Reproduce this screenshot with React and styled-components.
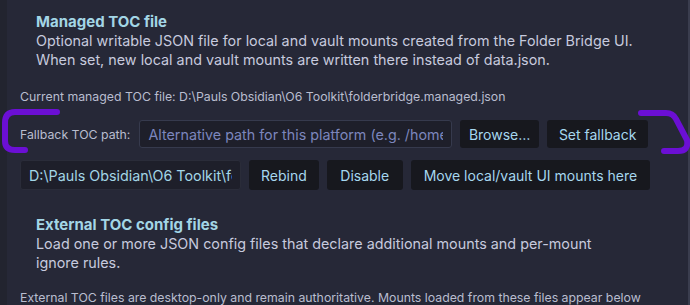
import React from 'react';
import styled, { createGlobalStyle } from 'styled-components';

const Global = createGlobalStyle`
  html, body {
    margin: 0;
    padding: 0;
    background: #262837;
    overflow: hidden;
  }
  * { box-sizing: border-box; }
`;

const Page = styled.div`
  position: relative;
  width: 690px;
  height: 305px;
  background: #262837;
  border-left: 7px solid #22242f;
  border-right: 2px solid #3a3d4e;
  font-family: Inter, "Noto Sans", sans-serif;
  padding: 12px 0 0 13px;
  color: #c8cbdc;
`;

const SettingInfo = styled.div`
  padding-left: 16px;
  margin-bottom: ${p => p.gap || 0}px;
`;

const Heading = styled.div`
  font-size: 15px;
  font-weight: 700;
  line-height: 19px;
  color: #a3d6e6;
  margin-bottom: 1px;
`;

const Desc = styled.div`
  font-size: 14.35px;
  line-height: 18.5px;
  color: #c7cade;
  white-space: nowrap;
`;

const Note = styled.div`
  font-size: 12.3px;
  line-height: 16px;
  color: #b9bdcf;
  white-space: nowrap;
  margin-bottom: ${p => p.gap || 0}px;
`;

const Row = styled.div`
  display: flex;
  align-items: center;
  gap: 8px;
  margin-bottom: ${p => p.gap || 0}px;
`;

const Label = styled.span`
  font-size: 12.3px;
  color: #b9bdcf;
  margin-right: 1px;
  white-space: nowrap;
`;

const Input = styled.input`
  height: ${p => p.h || 28}px;
  width: ${p => p.w}px;
  background: #1e1f2a;
  border: 1px solid ${p => (p.framed ? '#363a4d' : '#2a2c39')};
  border-radius: 3px;
  padding: 0 ${p => p.px || 8}px;
  font-family: inherit;
  font-size: 14.3px;
  color: #a3d6e6;
  outline: none;
  &::placeholder {
    color: #7c86bd;
  }
`;

const Button = styled.button`
  height: ${p => p.h || 28}px;
  padding: 0 ${p => p.px || 12}px;
  background: #17181e;
  border: none;
  border-radius: 3px;
  font-family: inherit;
  font-size: 14px;
  color: #a6d7ef;
  white-space: nowrap;
  cursor: pointer;
`;

const Mark = styled.svg`
  position: absolute;
  overflow: visible;
  pointer-events: none;
`;

export default function App() {
  return (
    <>
      <Global />
      <Page>
        <SettingInfo gap={20}>
          <Heading>Managed TOC file</Heading>
          <Desc>Optional writable JSON file for local and vault mounts created from the Folder Bridge UI.</Desc>
          <Desc>When set, new local and vault mounts are written there instead of data.json.</Desc>
        </SettingInfo>
        <Note gap={15}>Current managed TOC file: D:\Pauls Obsidian\O6 Toolkit\folderbridge.managed.json</Note>
        <Row gap={12}>
          <Label>Fallback TOC path:</Label>
          <Input framed w={313} px={8} placeholder="Alternative path for this platform (e.g. /home/pauls/obsidian/folderbridge.managed.json)" />
          <Button px={8.5}>Browse…</Button>
          <Button px={12}>Set fallback</Button>
        </Row>
        <Row gap={25}>
          <Input h={30} w={221} px={8} defaultValue="D:\Pauls Obsidian\O6 Toolkit\folderbridge.managed.json" />
          <Button h={30} px={12}>Rebind</Button>
          <Button h={30} px={13.5}>Disable</Button>
          <Button h={30} px={13}>Move local/vault UI mounts here</Button>
        </Row>
        <SettingInfo gap={18}>
          <Heading>External TOC config files</Heading>
          <Desc>Load one or more JSON config files that declare additional mounts and per-mount</Desc>
          <Desc>ignore rules.</Desc>
        </SettingInfo>
        <Note>External TOC files are desktop-only and remain authoritative. Mounts loaded from these files appear below</Note>

        <Mark style={{ left: -7, top: 0 }} width="70" height="160">
          <path d="M57 112 H15 Q5 112 5 123 V141 Q5 150 15 150 H25" fill="none" stroke="#6b0fd4" strokeWidth="6" strokeLinecap="round" strokeLinejoin="round" />
        </Mark>
        <Mark style={{ left: -7, top: 0 }} width="700" height="160">
          <path d="M641 113 H666 Q673 113 676 119 L687 140 Q689 151 678 151 H664" fill="none" stroke="#6b0fd4" strokeWidth="6" strokeLinecap="round" strokeLinejoin="round" />
        </Mark>
      </Page>
    </>
  );
}
